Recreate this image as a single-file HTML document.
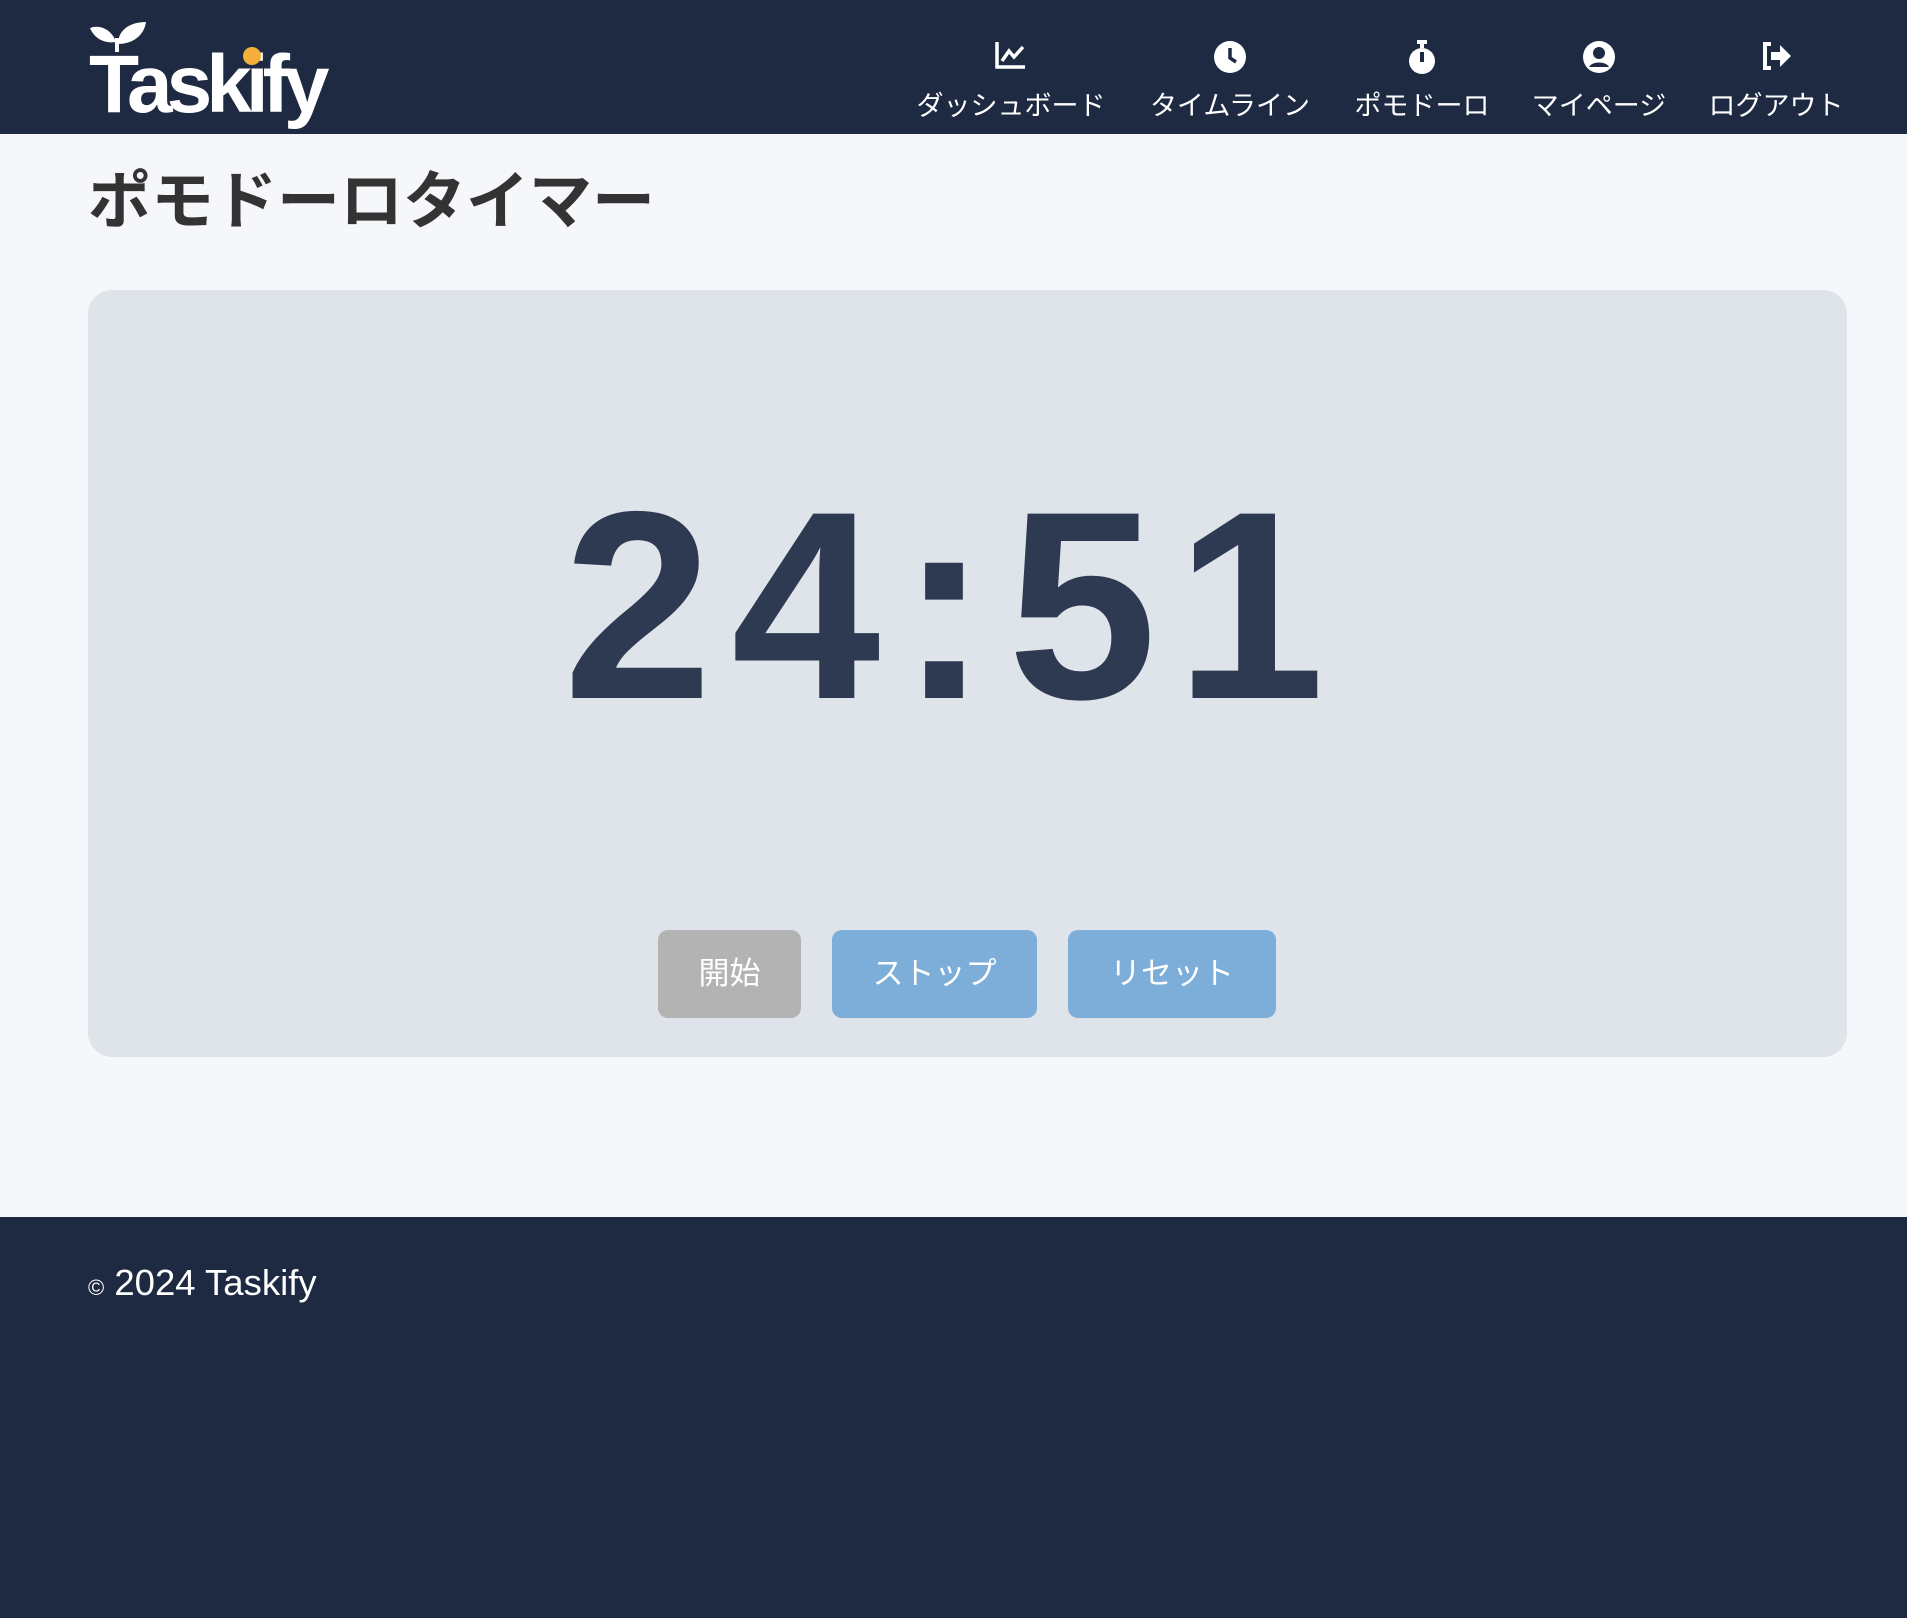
<!DOCTYPE html>
<html><head><meta charset="utf-8"><style>
*{margin:0;padding:0;box-sizing:border-box}
body{width:1907px;height:1618px;background:#f5f7fa;font-family:"Liberation Sans","Noto Sans CJK JP",sans-serif;position:relative;overflow:hidden}
header{position:absolute;left:0;top:0;width:1907px;height:134px;background:#1e2942}
.logo{position:absolute;left:89px;color:#fff;font-weight:bold;font-size:82px;letter-spacing:-6px;line-height:1}
.nav{position:absolute;top:0;height:134px;color:#fff;text-align:center;transform:translateX(-50%)}
.nav svg{position:absolute;left:50%;top:40px;transform:translateX(-50%)}
.nav span{position:absolute;top:88px;left:50%;transform:translateX(-50%);white-space:nowrap;font-size:27px;line-height:36px}
h1{position:absolute;left:88px;top:162px;font-size:63px;color:#333;font-weight:bold;line-height:80px}
.card{position:absolute;left:88px;top:290px;width:1759px;height:767px;background:#dfe3ea;border-radius:24px}
.timer{position:absolute;left:0;width:1907px;top:465px;text-align:center;font-size:268px;line-height:280px;color:#2d3a52;font-weight:bold;letter-spacing:19px}
.btn{position:absolute;top:930px;height:88px;border-radius:10px;color:#fff;font-size:31px;line-height:88px;text-align:center}
footer{position:absolute;left:0;top:1217px;width:1907px;height:401px;background:#1e2942;color:#fff}
footer div{position:absolute;left:88px;top:44px;font-size:36.5px;line-height:44px}
</style></head><body>
<header>
<svg style="position:absolute;left:90px;top:20px" width="60" height="32" viewBox="0 0 60 32"><path d="M0 8 C10 4 22 10 26 22 C14 24 4 18 0 8Z" fill="#fff"/><path d="M28 24 C28 10 40 2 56 2 C54 16 42 24 28 24Z" fill="#fff"/><rect x="25" y="18" width="4" height="14" fill="#fff"/></svg>
<div class="logo" style="top:44px">Taskify</div>
<svg style="position:absolute;left:242px;top:46px" width="20" height="20"><circle cx="10" cy="10" r="9" fill="#f4b13a"/></svg>
<div class="nav" style="left:1011px"><svg width="34" height="30" viewBox="0 0 34 30"><path d="M3 2V27H31" fill="none" stroke="#fff" stroke-width="3.5"/><path d="M8 21L15 11L20 17L29 7" fill="none" stroke="#fff" stroke-width="3.5"/></svg><span>ダッシュボード</span></div>
<div class="nav" style="left:1230px"><svg width="34" height="34" viewBox="0 0 34 34"><circle cx="17" cy="17" r="16" fill="#fff"/><path d="M17 8V18L23 22" fill="none" stroke="#1e2942" stroke-width="3.5"/></svg><span>タイムライン</span></div>
<div class="nav" style="left:1422px"><svg width="30" height="36" viewBox="0 0 30 36"><rect x="10" y="0" width="10" height="4" fill="#fff"/><rect x="13" y="2" width="4" height="6" fill="#fff"/><circle cx="15" cy="21" r="13" fill="#fff"/><rect x="13" y="12" width="4" height="10" fill="#1e2942"/></svg><span>ポモドーロ</span></div>
<div class="nav" style="left:1599px"><svg width="34" height="34" viewBox="0 0 34 34"><circle cx="17" cy="17" r="16" fill="#fff"/><circle cx="17" cy="13" r="6" fill="#1e2942"/><path d="M7 27C10 21 24 21 27 27" fill="#1e2942"/></svg><span>マイページ</span></div>
<div class="nav" style="left:1776px"><svg width="34" height="32" viewBox="0 0 34 32"><path d="M12 4H6V28H12" fill="none" stroke="#fff" stroke-width="4"/><path d="M12 12H21V5L32 16L21 27V20H12Z" fill="#fff"/></svg><span>ログアウト</span></div>
</header>
<h1>ポモドーロタイマー</h1>
<div class="card"></div>
<div class="timer">24:51</div>
<div class="btn" style="left:658px;width:143px;background:#b3b3b3">開始</div>
<div class="btn" style="left:832px;width:205px;background:#7daed9">ストップ</div>
<div class="btn" style="left:1068px;width:208px;background:#7daed9">リセット</div>
<footer><div><span style="font-size:22px">©</span> 2024 Taskify</div></footer>
</body></html>
